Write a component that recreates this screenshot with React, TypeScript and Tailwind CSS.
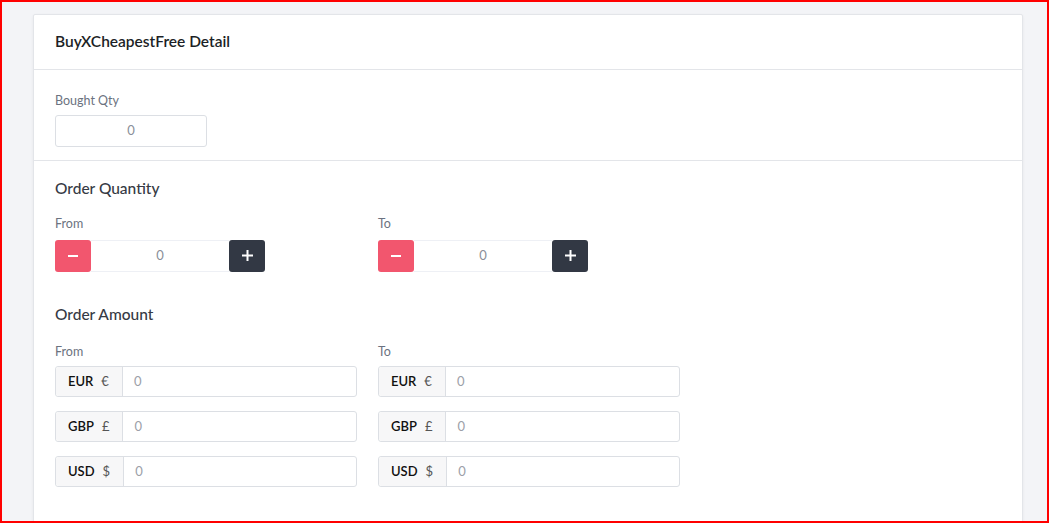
import React from 'react';

const font = { fontFamily: 'Lato, "Open Sans", sans-serif' };

function Stepper() {
  return (
    <div className="flex h-[32px] w-[210px]">
      <button className="flex h-full w-[36px] items-center justify-center rounded-[3px] bg-[#f2566e]">
        <span className="block h-[2px] w-[10px] bg-white" />
      </button>
      <div className="flex flex-1 items-center justify-center border-y border-[#eef0f5] text-[13px] text-[#8a8f99]">0</div>
      <button className="flex h-full w-[36px] items-center justify-center rounded-[3px] bg-[#323844]">
        <svg width="11" height="11" viewBox="0 0 11 11" fill="none" stroke="white" strokeWidth="2">
          <path d="M5.5 0v11M0 5.5h11" />
        </svg>
      </button>
    </div>
  );
}

function CurrencyInput({ code, symbol }: { code: string; symbol: string }) {
  return (
    <div className="flex h-[31px] w-[302px] rounded-[3px] border border-[#dcdfe4]">
      <div className="flex items-center gap-[8px] rounded-l-[3px] border-r border-[#dcdfe4] bg-[#f7f7f8] pl-[12px] pr-[13px] text-[13px]">
        <span className="font-semibold text-[#111]">{code}</span>
        <span className="text-[#555]">{symbol}</span>
      </div>
      <div className="flex flex-1 items-center px-[11px] text-[13px] text-[#9ca0a8]">0</div>
    </div>
  );
}

function AmountColumn({ label }: { label: string }) {
  return (
    <div className="w-[302px]">
      <div className="mb-[4px] text-[12.5px] text-[#6b7280]">{label}</div>
      <div className="flex flex-col gap-[14px]">
        <CurrencyInput code="EUR" symbol="€" />
        <CurrencyInput code="GBP" symbol="£" />
        <CurrencyInput code="USD" symbol="$" />
      </div>
    </div>
  );
}

export default function App() {
  return (
    <div className="h-[523px] w-[1049px] overflow-hidden border-2 border-[#ff0000] bg-[#f3f4f7] pl-[31px] pr-[24px] pt-[12px]" style={font}>
      <div className="h-[600px] rounded-[2px] border border-[#e3e5e9] bg-white shadow-[0_1px_3px_rgba(0,0,0,0.06)]">
        <div className="flex h-[55px] items-center border-b border-[#e3e5e9] px-[21px]">
          <h1 className="text-[15.5px] font-semibold text-[#1c1f26]">BuyXCheapestFree Detail</h1>
        </div>
        <div className="border-b border-[#e3e5e9] px-[21px] pb-[13px] pt-[22px]">
          <div className="mb-[4px] text-[12.5px] text-[#6b7280]">Bought Qty</div>
          <div className="flex h-[32px] w-[152px] items-center justify-center rounded-[3px] border border-[#dcdfe4] text-[13px] text-[#8a8f99]">0</div>
        </div>
        <div className="px-[21px] pt-[16px]">
          <h2 className="text-[15.5px] font-medium text-[#363a44]">Order Quantity</h2>
          <div className="mt-[15px] flex gap-[21px]">
            <div className="w-[302px]">
              <div className="mb-[6px] text-[12.5px] text-[#6b7280]">From</div>
              <Stepper />
            </div>
            <div className="w-[302px]">
              <div className="mb-[6px] text-[12.5px] text-[#6b7280]">To</div>
              <Stepper />
            </div>
          </div>
          <h2 className="mt-[31px] text-[15.5px] font-medium text-[#363a44]">Order Amount</h2>
          <div className="mt-[17px] flex gap-[21px]">
            <AmountColumn label="From" />
            <AmountColumn label="To" />
          </div>
        </div>
      </div>
    </div>
  );
}
